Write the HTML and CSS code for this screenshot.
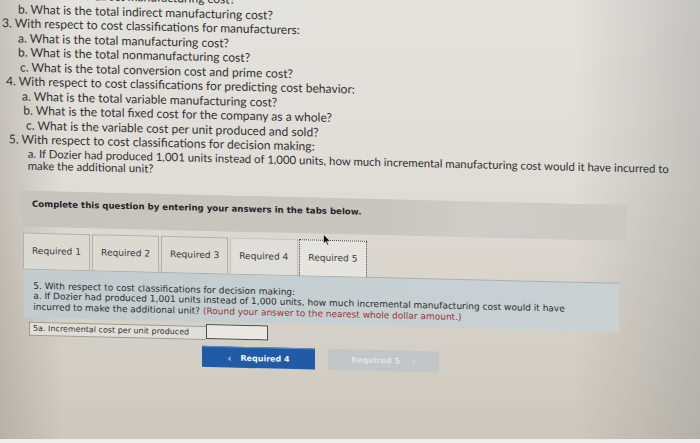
FILE: index.html
```html
<!DOCTYPE html>
<html lang="en">
<head>
<meta charset="utf-8">
<title>Dozier cost classifications</title>
<link rel="stylesheet" href="styles.css">
</head>
<body>
<div class="screen">
  <div class="page">
    <div class="intro">
      <p class="ln s2">a. What is the direct manufacturing cost?</p>
      <p class="ln s2">b. What is the total indirect manufacturing cost?</p>
      <p class="ln n3">3. With respect to cost classifications for manufacturers:</p>
      <p class="ln s3">a. What is the total manufacturing cost?</p>
      <p class="ln s3">b. What is the total nonmanufacturing cost?</p>
      <p class="ln s3b">c. What is the total conversion cost and prime cost?</p>
      <p class="ln n4">4. With respect to cost classifications for predicting cost behavior:</p>
      <p class="ln s4">a. What is the total variable manufacturing cost?</p>
      <p class="ln s4b">b. What is the total fixed cost for the company as a whole?</p>
      <p class="ln s4c">c. What is the variable cost per unit produced and sold?</p>
      <p class="ln n5">5. With respect to cost classifications for decision making:</p>
      <p class="detail">a. If Dozier had produced 1,001 units instead of 1,000 units, how much incremental manufacturing cost would it have incurred to<br>make the additional unit?</p>
    </div>

    <div class="banner">Complete this question by entering your answers in the tabs below.</div>

    <div class="tabs">
      <div class="tab">Required 1</div>
      <div class="tab">Required 2</div>
      <div class="tab">Required 3</div>
      <div class="tab tab-light">Required 4</div>
      <div class="tab tab-active">Required 5</div>
      <svg class="cursor" width="8" height="12" viewBox="0 0 8 12"><path d="M0.5 0.5 L0.5 10 L2.8 7.8 L4.3 11.3 L5.6 10.7 L4.2 7.4 L7.3 7.4 Z" fill="#111" stroke="#eee" stroke-width="0.6"/></svg>
    </div>

    <div class="panel">
      <p class="pl">5. With respect to cost classifications for decision making:</p>
      <p class="pl">a. If Dozier had produced 1,001 units instead of 1,000 units, how much incremental manufacturing cost would it have</p>
      <p class="pl">incurred to make the additional unit? <span class="hint">(Round your answer to the nearest whole dollar amount.)</span></p>
    </div>

    <div class="answer-row">
      <div class="answer-label">5a. Incremental cost per unit produced</div>
      <div class="answer-input"></div>
    </div>

    <div class="nav">
      <div class="btn btn-prev"><span class="chev">&#8249;</span><span>Required 4</span></div>
      <div class="btn btn-next"><span>Required 5</span><span class="chev">&#8250;</span></div>
    </div>
  </div>
</div>
<div class="strip"></div>
</body>
</html>
```

FILE: styles.css
```css
html, body {
  margin: 0;
  padding: 0;
}

body {
  width: 700px;
  height: 443px;
  overflow: hidden;
  display: flex;
  flex-direction: column;
  font-family: "Lato", "Liberation Sans", sans-serif;
  color: #323232;
  background:
    linear-gradient(90deg, rgba(130, 124, 112, 0.30) 0%, rgba(130, 124, 112, 0) 9%, rgba(130, 130, 125, 0) 82%, rgba(120, 124, 122, 0.30) 100%),
    linear-gradient(180deg, #e4e2dd 0%, #e0ddd7 40%, #d7d2c9 70%, #cdc7bd 100%);
}

.screen {
  flex: 1;
  overflow: hidden;
}

/* the photographed screen is slightly tilted */
.page {
  width: 700px;
  transform-origin: 0 0;
  transform: skewY(1.375deg);
}

.strip {
  height: 4px;
  background: #eeeeec;
}

/* intro question list */
.intro {
  margin-top: -12.75px;
  font-size: 12.1px;
  line-height: 14.5px;
}

.ln {
  margin: 0;
  white-space: nowrap;
}

.s2 { padding-left: 18px; }
.n3 { padding-left: 2px; }
.s3 { padding-left: 18px; }
.s3b { padding-left: 20px; }
.n4 { padding-left: 6px; }
.s4 { padding-left: 22px; }
.s4b { padding-left: 23.3px; }
.s4c { padding-left: 26px; }
.n5 { padding-left: 8.8px; }

.detail {
  margin: 0;
  padding-left: 27.7px;
  font-size: 11.4px;
  line-height: 12.5px;
  white-space: nowrap;
}

/* instruction banner */
.banner {
  margin: 18.25px 0 0 20px;
  width: 607px;
  height: 36px;
  box-sizing: border-box;
  padding: 8.5px 0 0 12px;
  background: linear-gradient(90deg, #c7c4be 0%, #c9c6c0 60%, #cfcdc8 75%, #cbc9c4 100%);
  font-family: "DejaVu Sans", Verdana, sans-serif;
  font-weight: bold;
  font-size: 8.6px;
  line-height: 11px;
  color: #262626;
}

/* tabs */
.tabs {
  position: relative;
  display: flex;
  gap: 1.5px;
  margin: 6px 0 0 22.7px;
}

.tab {
  width: 67.6px;
  height: 36px;
  box-sizing: border-box;
  display: flex;
  align-items: center;
  justify-content: center;
  border: 1px solid #b3b0a9;
  border-bottom: none;
  background: #dcd9d3;
  font-family: "DejaVu Sans", Verdana, sans-serif;
  font-size: 9.1px;
  color: #3a3a3a;
}

.tab-light {
  background: #e0ded9;
  border-color: #c6c3bd;
}

.tab-active {
  background: #e6e4df;
  border: 1px dotted #4a4a4a;
  border-bottom: none;
}

.cursor {
  position: absolute;
  left: 300px;
  top: -6px;
}

/* question panel */
.panel {
  margin-left: 24px;
  width: 595px;
  box-sizing: border-box;
  padding: 10.75px 0 5.75px 9.2px;
  background: linear-gradient(90deg, #c3cccf 0%, #c6cfd2 60%, #c9d1d3 100%);
  border-top: 1px solid #aab1b3;
  font-family: "DejaVu Sans", Verdana, sans-serif;
  font-size: 9px;
  line-height: 10.5px;
  color: #2c2c2c;
}

.pl {
  margin: 0;
  white-space: nowrap;
}

.hint {
  color: #953638;
}

/* answer row */
.answer-row {
  display: flex;
  align-items: flex-start;
  margin: 2.5px 0 0 29px;
}

.answer-label {
  width: 177px;
  height: 14px;
  margin-top: 2px;
  box-sizing: border-box;
  padding-left: 3px;
  border: 1px solid #9d9b96;
  border-right: none;
  background: #e0ded9;
  font-family: "DejaVu Sans", Verdana, sans-serif;
  font-size: 8px;
  line-height: 12px;
  color: #333;
  white-space: nowrap;
}

.answer-input {
  width: 62px;
  height: 15px;
  box-sizing: border-box;
  border: 1.5px solid #4e4e4c;
  background: #e9e8e4;
}

/* navigation buttons */
.nav {
  display: flex;
  gap: 13px;
  margin: 6px 0 0 202px;
}

.btn {
  height: 21px;
  box-sizing: border-box;
  display: flex;
  align-items: center;
  justify-content: center;
  gap: 9px;
  font-family: "DejaVu Sans", Verdana, sans-serif;
  font-weight: bold;
  font-size: 8px;
}

.btn-prev {
  width: 113px;
  background: #1f5ba6;
  border-top: 1px solid #5f8cc4;
  color: #f4f6fa;
}

.btn-next {
  width: 111px;
  background: #c3c6c7;
  color: #e0e2e2;
  gap: 12px;
}

.chev {
  font-size: 10px;
  font-weight: normal;
}
```
